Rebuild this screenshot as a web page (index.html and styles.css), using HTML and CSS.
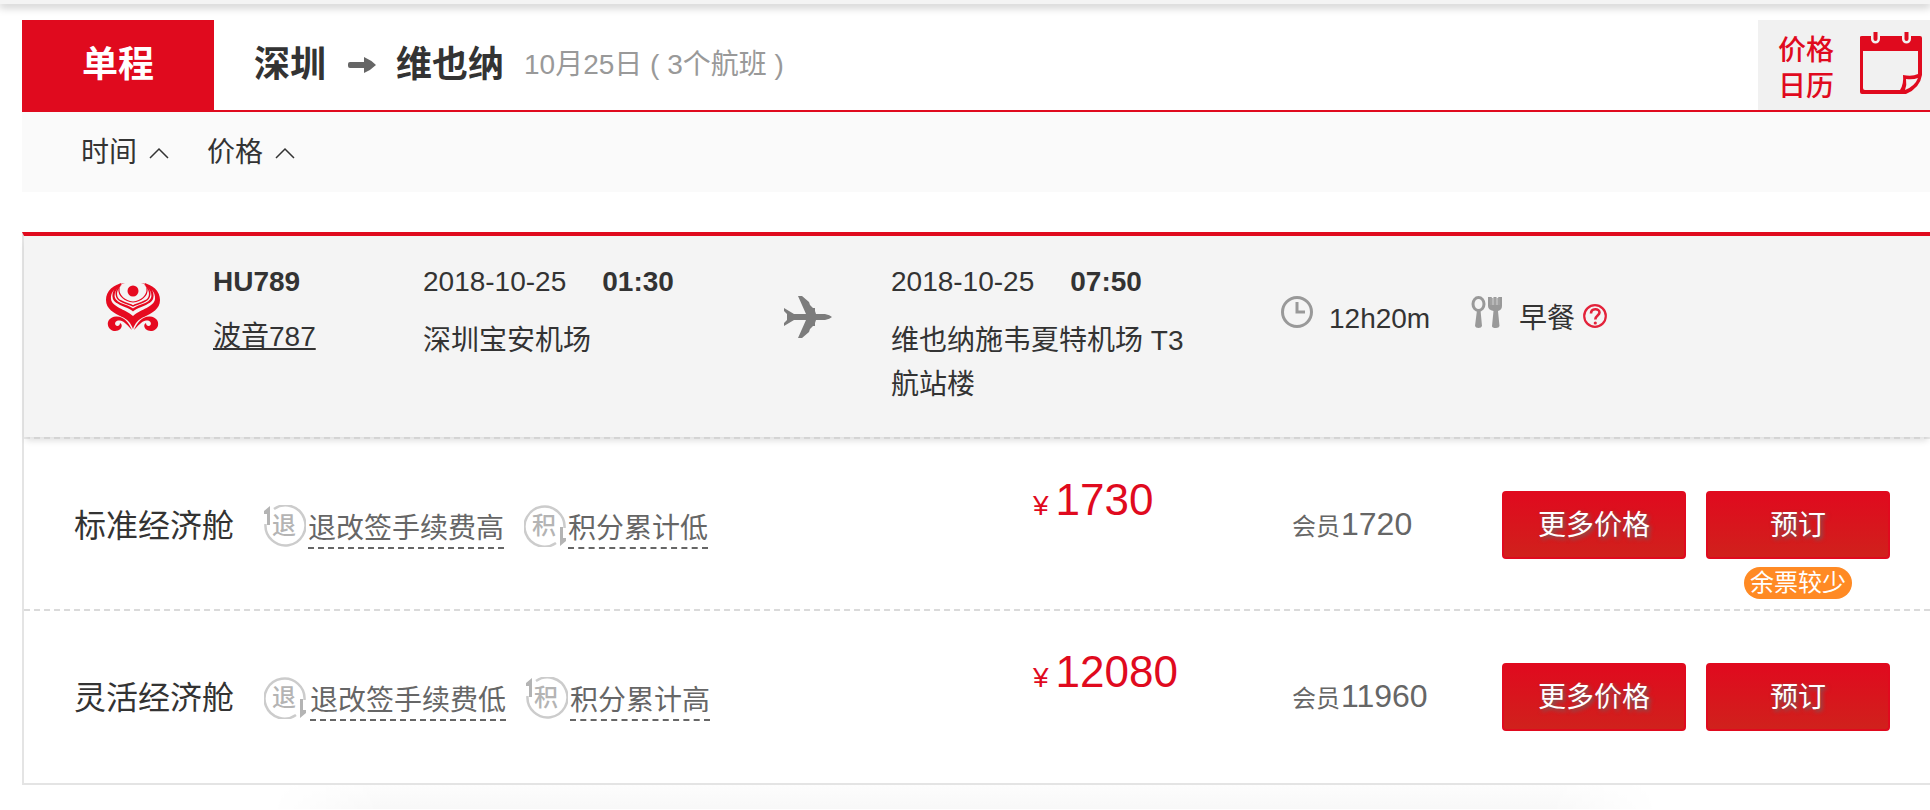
FILE: index.html
```html
<!DOCTYPE html>
<html lang="zh-CN">
<head>
<meta charset="utf-8">
<title>深圳 - 维也纳 航班</title>
<link rel="stylesheet" href="styles.css">
</head>
<body>
<div class="topbar"></div>
<main class="page">
  <header class="route">
    <span class="route-type">单程</span>
    <h1 class="route-title">
      <span>深圳</span>
      <svg class="route-arrow" width="28" height="18" viewBox="0 0 28 18" aria-hidden="true"><path d="M2 6H16V1Q23 4 28 9Q23 14 16 17V12H2Q0 12 0 10V8Q0 6 2 6Z" fill="#666"/></svg>
      <span>维也纳</span>
    </h1>
    <span class="route-date">10月25日 ( 3个航班 )</span>
    <a class="calendar" href="#calendar">
      <span class="calendar-text">价格<br>日历</span>
      <svg width="62" height="62" viewBox="0 0 62 62" aria-hidden="true">
        <path d="M0 5Q0 4 2 4H11V7A4.500 4.500 0 0 0 20 7V4H42V7A4.500 4.500 0 0 0 51 7V4H60Q62 4 62 6V43Q60 56 46 62H2Q0 62 0 60ZM3 19V56Q3 58 5 58H40Q44 52 43 43Q52 45 58 42V19Z" fill="#e00a1e" fill-rule="evenodd"/>
        <path d="M46 47Q53 48 58 46Q55 54 45 58Q47 53 46 47Z" fill="#f1f1f1"/>
        <path d="M15.500 0V7M46.500 0V7" stroke="#e00a1e" stroke-width="4" stroke-linecap="round"/>
      </svg>
    </a>
  </header>

  <nav class="sort">
    <button type="button" class="sort-item">时间<svg width="20" height="12" viewBox="0 0 20 12" aria-hidden="true"><path d="M1 11L10 2L19 11" fill="none" stroke="#333" stroke-width="1.500"/></svg></button>
    <button type="button" class="sort-item">价格<svg width="20" height="12" viewBox="0 0 20 12" aria-hidden="true"><path d="M1 11L10 2L19 11" fill="none" stroke="#333" stroke-width="1.500"/></svg></button>
  </nav>

  <section class="card">
    <div class="flight">
      <svg class="logo" width="56" height="50" viewBox="0 0 56 50" role="img" aria-label="海南航空">
        <g fill="#e60a20">
          <circle cx="28" cy="9" r="5.500"/>
          <path d="M20 1C8 2 1 9 1 18C1 27 9 31 17 35C22 37 26 41 28 47C30 41 34 37 39 35C47 31 55 27 55 18C55 9 48 2 36 1C44 3 51 10 50 17C49 25 36 27 28 34C20 27 7 25 6 17C5 10 12 3 20 1Z"/>
        </g>
        <g fill="none" stroke="#e60a20">
          <path d="M16 2C8 7 6 16 12 20C17 24 24 24 28 28C32 24 39 24 44 20C50 16 48 7 40 2" stroke-width="2.200"/>
          <path d="M15 4C9 10 11 17 16 19C21 22 25 22 28 24C31 22 35 22 40 19C45 17 47 10 41 4" stroke-width="1.500"/>
          <path d="M14 6C13 14 20 19 28 20C36 19 43 14 42 6" stroke-width="1.200"/>
        </g>
        <g fill="#e60a20">
          <path d="M27 48C24 41 19 34 11 34.500C5 35 2 39 3 43.500C4 48 9 50 13 48.500C17 47 18 42.500 15 41C15 44 12 45 10.500 43C9 40 12 38 15 38.500C20 39.500 23 44 27 48Z"/>
          <path d="M29 48C32 41 37 34 45 34.500C51 35 54 39 53 43.500C52 48 47 50 43 48.500C39 47 38 42.500 41 41C41 44 44 45 45.500 43C47 40 44 38 41 38.500C36 39.500 33 44 29 48Z"/>
        </g>
      </svg>
      <div class="plane-info">
        <strong class="line">HU789</strong>
        <a class="line model" href="#model">波音787</a>
      </div>
      <div class="stop">
        <div class="line moment"><span>2018-10-25</span><strong>01:30</strong></div>
        <div class="airport">深圳宝安机场</div>
      </div>
      <svg class="plane" width="48" height="42" viewBox="0 0 48 42" aria-hidden="true"><path d="M14 0H18L25 6L26 9L29 12H31V15L32 18H41Q46 19 48 21Q46 23 41 24H32L31 27V30H29L26 33L25 36L18 42H14L22 24H10L5 27L0 30V27L3 24V18L0 15V12L5 15L10 18H22Z" fill="#7c7c7c"/></svg>
      <div class="stop">
        <div class="line moment"><span>2018-10-25</span><strong>07:50</strong></div>
        <div class="airport">维也纳施韦夏特机场 T3航站楼</div>
      </div>
      <div class="meta">
        <svg width="32" height="32" viewBox="0 0 32 32" aria-hidden="true"><circle cx="16" cy="16" r="14.500" fill="none" stroke="#999" stroke-width="3"/><path d="M16 6V16H24" fill="none" stroke="#999" stroke-width="3"/></svg>
        <span>12h20m</span>
      </div>
      <div class="meta">
        <svg width="32" height="32" viewBox="0 0 32 32" aria-hidden="true"><ellipse cx="7.500" cy="8" rx="5.500" ry="6.500" fill="none" stroke="#999" stroke-width="3"/><path d="M6 14H9.500L11 30Q10.500 32 7.500 32Q4.500 32 4 30ZM17 1H20V9H22.500V1H25.500V9H28V1H31V10Q31 14 27 15L28.500 30Q28 32 25 32Q21 32 21 30L22.500 15Q17 14 17 10Z" fill="#999"/><path d="M19 2H29V9H19Z" fill="#b8b8b8"/><path d="M20 1V9M24 1V9M28 1V9" stroke="#999" stroke-width="1.500"/></svg>
        <span>早餐</span>
        <svg class="help" width="24" height="24" viewBox="0 0 24 24" role="img" aria-label="餐食说明"><g fill="none" stroke="#e3223a"><circle cx="12" cy="12" r="10.800" stroke-width="2.200"/><path d="M8 9.500C8 4 16.500 4 16.500 8.500C16.500 11.500 12.300 11.500 12.300 15.500" stroke-width="2.600"/></g><circle cx="12.300" cy="19" r="1.600" fill="#e3223a"/></svg>
      </div>
    </div>

    <div class="fare">
      <h2 class="fare-name">标准经济舱</h2>
      <div class="tags">
        <span class="tag">
          <svg width="42" height="42" viewBox="0 0 42 42" aria-hidden="true"><path d="M10 4A20 20 0 1 1 1.500 19" fill="none" stroke="#ccc" stroke-width="2.500"/><path d="M6 1V20H3V9H0V6Z" fill="#b4b4b4"/><text class="seal" x="20" y="29">退</text></svg>
          <a class="tag-text" href="#refund">退改签手续费高</a>
        </span>
        <span class="tag">
          <svg width="42" height="42" viewBox="0 0 42 42" aria-hidden="true"><path d="M32 38A20 20 0 1 1 40.500 23" fill="none" stroke="#ccc" stroke-width="2.500"/><path d="M36 41V22H39V33H42V36Z" fill="#b4b4b4"/><text class="seal" x="20" y="29">积</text></svg>
          <a class="tag-text" href="#points">积分累计低</a>
        </span>
      </div>
      <div class="price"><span class="yen">¥</span><span>1730</span></div>
      <div class="member"><span class="member-label">会员</span><span>1720</span></div>
      <div class="actions">
        <button type="button" class="btn">更多价格</button>
        <div class="book">
          <button type="button" class="btn">预订</button>
          <span class="badge">余票较少</span>
        </div>
      </div>
    </div>

    <div class="fare">
      <h2 class="fare-name">灵活经济舱</h2>
      <div class="tags">
        <span class="tag">
          <svg width="44" height="42" viewBox="0 0 44 42" aria-hidden="true"><path d="M32 38A20 20 0 1 1 40.500 23" fill="none" stroke="#ccc" stroke-width="2.500"/><path d="M36 41V22H39V33H42V36Z" fill="#b4b4b4"/><text class="seal" x="20" y="29">退</text></svg>
          <a class="tag-text" href="#refund">退改签手续费低</a>
        </span>
        <span class="tag">
          <svg width="42" height="42" viewBox="0 0 42 42" aria-hidden="true"><path d="M10 4A20 20 0 1 1 1.500 19" fill="none" stroke="#ccc" stroke-width="2.500"/><path d="M6 1V20H3V9H0V6Z" fill="#b4b4b4"/><text class="seal" x="20" y="29">积</text></svg>
          <a class="tag-text" href="#points">积分累计高</a>
        </span>
      </div>
      <div class="price"><span class="yen">¥</span><span>12080</span></div>
      <div class="member"><span class="member-label">会员</span><span>11960</span></div>
      <div class="actions">
        <button type="button" class="btn">更多价格</button>
        <div class="book">
          <button type="button" class="btn">预订</button>
        </div>
      </div>
    </div>
  </section>
</main>
<div class="fade"></div>
</body>
</html>
```
FILE: styles.css
```css
* {
  box-sizing: border-box;
}

body {
  margin: 0;
  background: #fff;
  color: #333;
  font: 28px/44px "Liberation Sans", "Noto Sans CJK SC", sans-serif;
}

h1,
h2 {
  margin: 0;
}

svg {
  display: block;
  flex: none;
}

button {
  padding: 0;
  border: 0;
  background: none;
  color: inherit;
  font: inherit;
  cursor: pointer;
}

a {
  color: inherit;
  text-decoration: none;
}

.topbar {
  height: 4px;
  background: #f4f4f4;
  box-shadow: 0 2px 8px 1px rgba(0, 0, 0, 0.25);
}

.page {
  padding: 16px 0 0 22px;
}

/* Route header */
.route {
  display: flex;
  border-bottom: 2px solid #e00a1e;
  line-height: 90px;
}

.route-type {
  width: 192px;
  background: #e00a1e;
  color: #fff;
  font-size: 36px;
  font-weight: 700;
  text-align: center;
}

.route-title {
  display: flex;
  align-items: center;
  padding: 0 20px 0 40px;
  font-size: 36px;
  font-weight: 700;
  line-height: 90px;
}

.route-arrow {
  margin: 0 20px 0 22px;
}

.route-date {
  color: #999;
}

.calendar {
  display: flex;
  gap: 26px;
  margin-left: auto;
  padding: 12px 8px 0 20px;
  background: #f1f1f1;
  color: #e00a1e;
  font-weight: 500;
  line-height: 36px;
}

.calendar-text {
  padding-top: 1px;
}

/* Sort bar */
.sort {
  display: flex;
  gap: 38px;
  height: 80px;
  margin-bottom: 40px;
  padding: 2px 0 0 59px;
  background: #fafafa;
}

.sort-item {
  display: flex;
  align-items: center;
  gap: 12px;
}

/* Flight card */
.card {
  border: 2px solid #e4e4e4;
  border-top: 4px solid #e00a1e;
  border-right: 0;
}

.flight {
  position: relative;
  display: grid;
  grid-template-columns: 108fr 210fr 361fr 107fr 390fr 190fr 459fr;
  align-items: start;
  padding: 24px 0 30px 81px;
  background: #f4f4f4;
  box-shadow: 0 6px 6px -2px rgba(0, 0, 0, 0.12);
}

.logo {
  margin-top: 22px;
}

.line {
  display: block;
}

.model {
  width: max-content;
  margin-top: 11px;
  text-decoration: underline;
  text-decoration-thickness: 2px;
  text-underline-offset: 2px;
  text-decoration-skip-ink: none;
}

.moment {
  display: flex;
  gap: 36px;
}

.airport {
  max-width: 300px;
  margin-top: 15px;
}

.plane {
  margin-top: 36px;
}

.meta {
  display: flex;
  align-items: baseline;
  gap: 16px;
  margin-top: 36px;
}

.help {
  margin-left: -8px;
}

/* Fare rows */
.fare {
  display: grid;
  grid-template-columns: 190fr 769fr 259fr 210fr 428fr;
  align-items: start;
  height: 172px;
  padding: 39px 0 0 50px;
  border-top: 2px dashed #dadada;
}

.flight + .fare {
  border-top-color: #ececec;
}

.fare:last-child {
  height: 174px;
}

.fare-name {
  margin-top: 26px;
  font-size: 32px;
  font-weight: 400;
  line-height: 44px;
}

.tags {
  display: flex;
  gap: 20px;
  margin-top: 27px;
  color: #666;
}

.tag {
  display: flex;
  gap: 2px;
}

.seal {
  fill: #b4b4b4;
  font-size: 24px;
  font-weight: 500;
  text-anchor: middle;
}

.tag-text {
  margin-top: 6px;
  border-bottom: 2px dashed #666;
  line-height: 36px;
}

.price {
  display: flex;
  align-items: baseline;
  gap: 7px;
  color: #e00a1e;
  font-size: 44px;
}

.yen {
  font-size: 28px;
}

.member {
  display: flex;
  align-items: baseline;
  gap: 1px;
  margin-top: 24px;
  color: #666;
  font-size: 32px;
}

.member-label {
  font-size: 24px;
}

.actions {
  display: flex;
  gap: 20px;
  margin-top: 13px;
}

.book {
  display: flex;
  flex-direction: column;
  align-items: center;
  gap: 8px;
}

.btn {
  width: 184px;
  height: 68px;
  padding-top: 2px;
  border: 2px solid #e00a1e;
  border-radius: 4px;
  background: linear-gradient(#e00a1e, #d0211c);
  color: #fff;
  text-shadow: 2px 2px 4px #666;
}

.actions > .btn {
  align-self: flex-start;
}

.badge {
  padding: 0 6px;
  border-radius: 16px;
  background: #ff8a24;
  color: #fff;
  font-size: 24px;
  line-height: 32px;
}

/* Soft shade at the foot of the page */
.fade {
  height: 24px;
  margin: 0 14%;
  background: linear-gradient(#fdfdfd, #f8f8f8);
  mask-image: linear-gradient(90deg, transparent, #000 8%, #000 92%, transparent);
}
```
